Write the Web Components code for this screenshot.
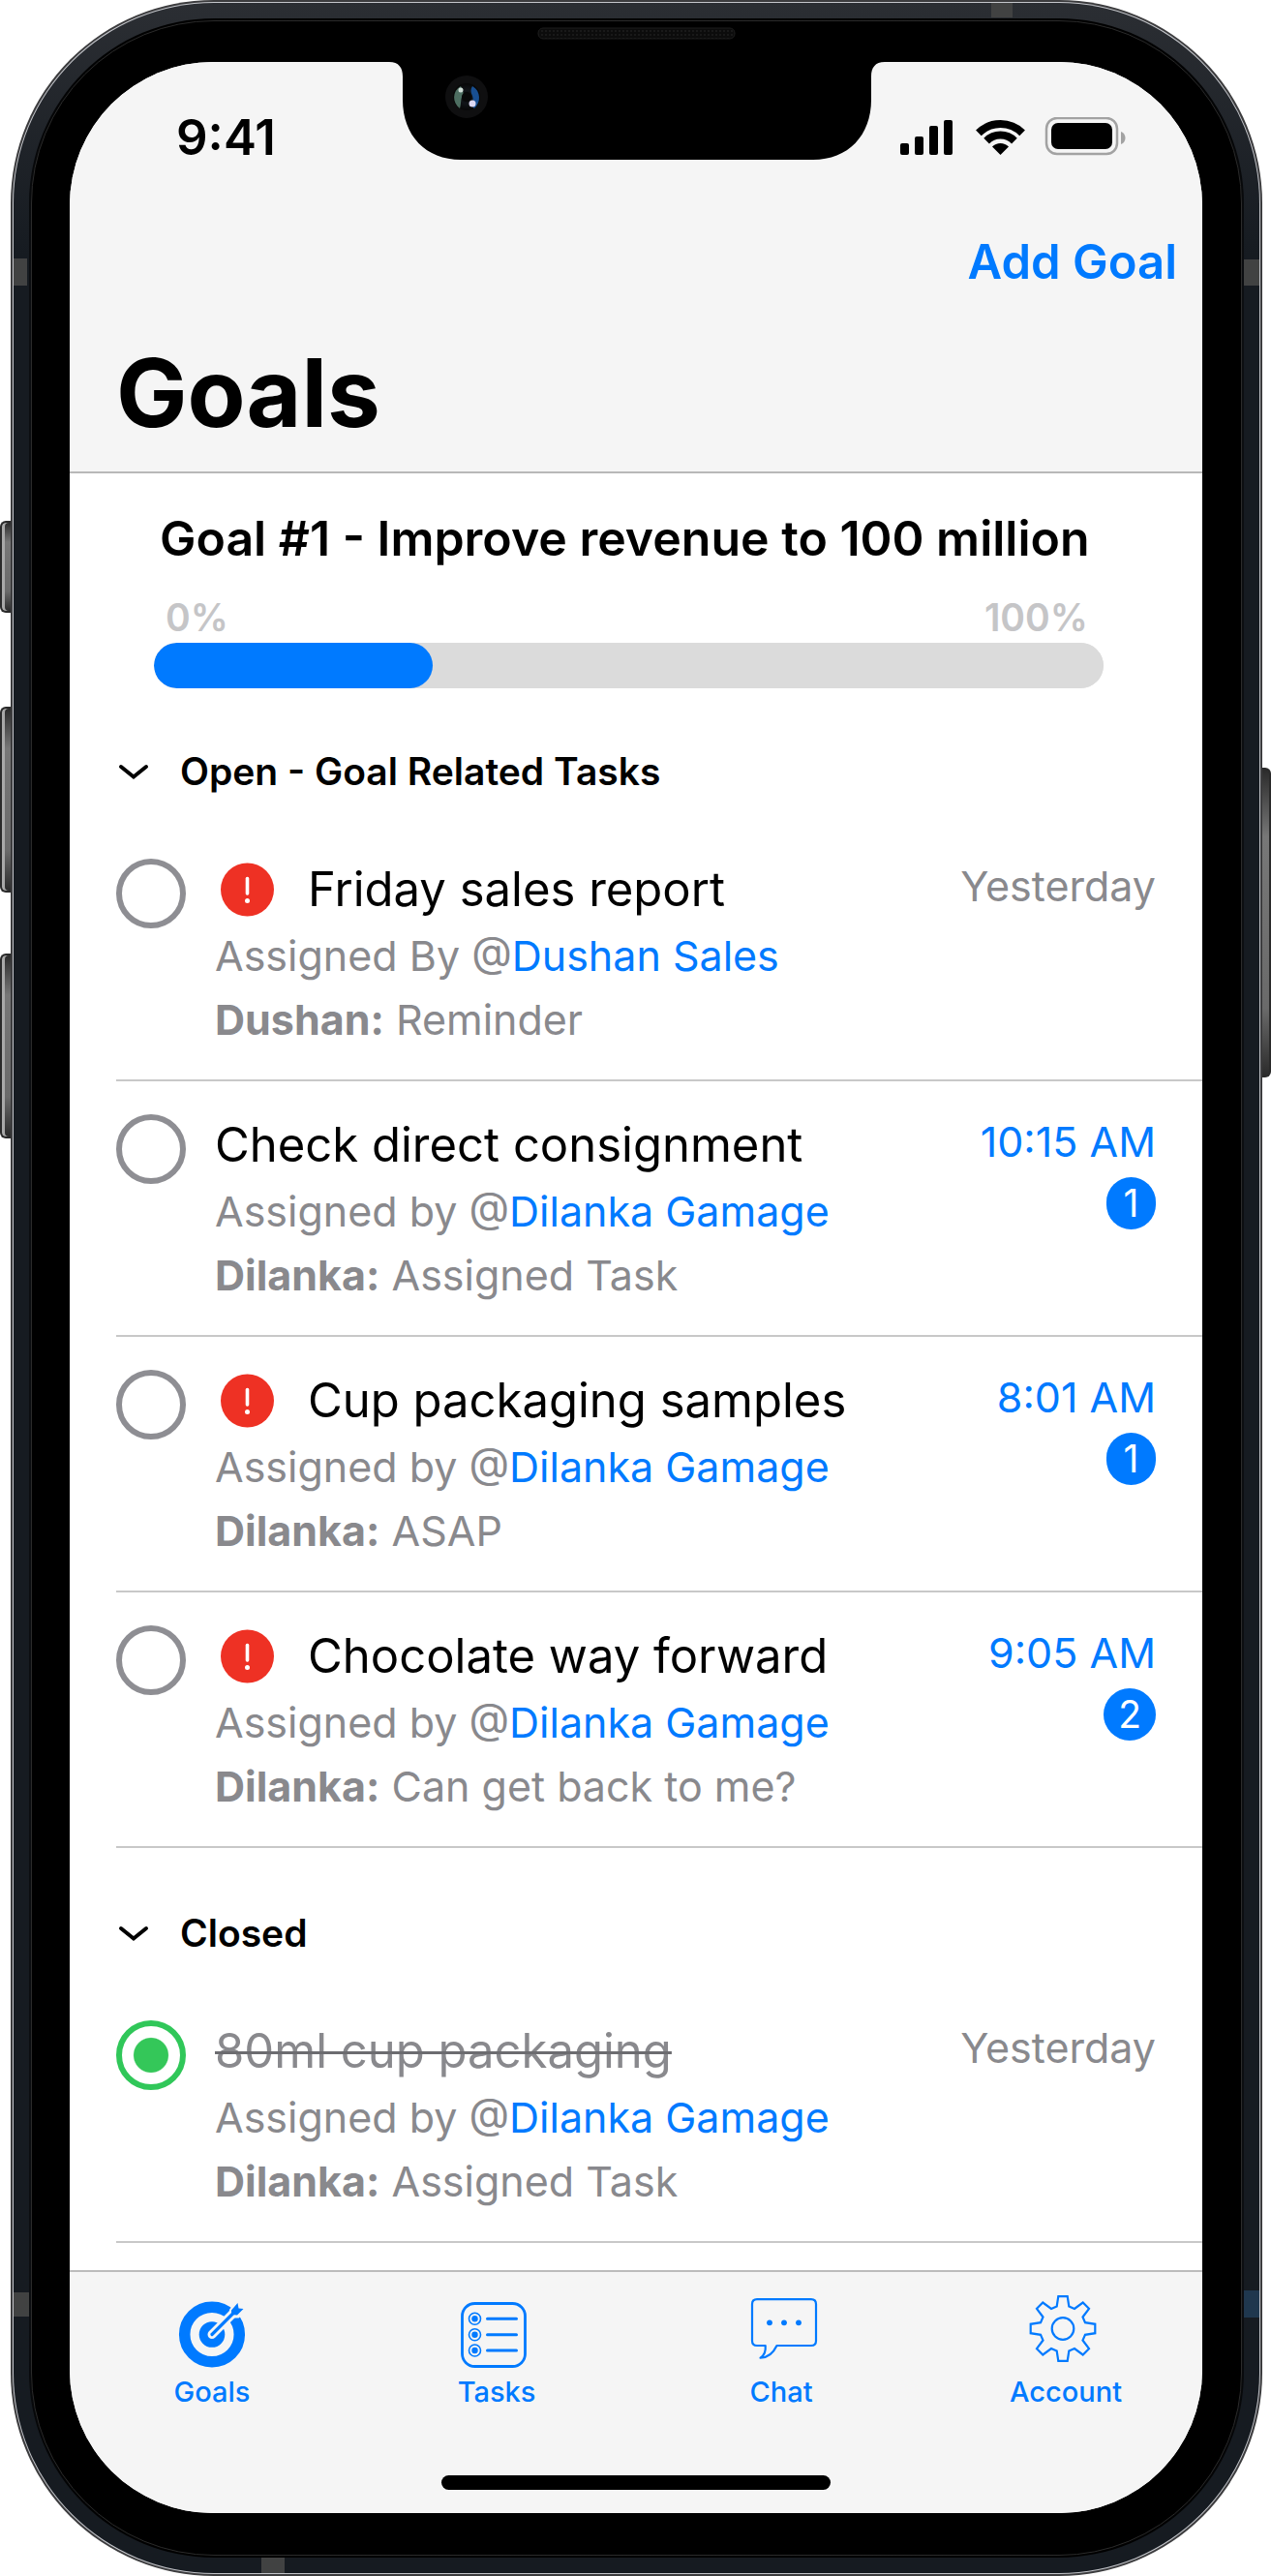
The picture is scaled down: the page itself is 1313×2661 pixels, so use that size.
<!DOCTYPE html>
<html lang="en">
<head>
<meta charset="utf-8">
<meta name="viewport" content="width=device-width, initial-scale=1">
<title>Goals</title>
<style>
  html, body { margin: 0; background: #fff; }
  body {
    font-family: Inter, "Liberation Sans", sans-serif;
    color: #000;
    --blue: #007aff;
    --grey: #89898d;
    --bar: #f5f5f5;
    --line: #c8c8c8;
  }
</style>
</head>
<body>

<phone-shell>
  <app-header heading="Goals" action="Add Goal">
    <status-bar time="9:41"></status-bar>
  </app-header>
  <goal-list>
    <goal-progress value="29.4" from="0%" to="100%">Goal #1 - Improve revenue to 100 million</goal-progress>
    <task-section heading="Open - Goal Related Tasks">
      <task-row urgent time="Yesterday" verb="Assigned By" person="Dushan Sales" author="Dushan" note="Reminder">Friday sales report</task-row>
      <task-row unread="1" time="10:15 AM" verb="Assigned by" person="Dilanka Gamage" author="Dilanka" note="Assigned Task">Check direct consignment</task-row>
      <task-row urgent unread="1" time="8:01 AM" verb="Assigned by" person="Dilanka Gamage" author="Dilanka" note="ASAP">Cup packaging samples</task-row>
      <task-row urgent unread="2" time="9:05 AM" verb="Assigned by" person="Dilanka Gamage" author="Dilanka" note="Can get back to me?">Chocolate way forward</task-row>
    </task-section>
    <task-section heading="Closed">
      <task-row done time="Yesterday" verb="Assigned by" person="Dilanka Gamage" author="Dilanka" note="Assigned Task">80ml cup packaging</task-row>
    </task-section>
  </goal-list>
  <tab-bar>
    <tab-item icon="goals" href="#goals">Goals</tab-item>
    <tab-item icon="tasks" href="#tasks">Tasks</tab-item>
    <tab-item icon="chat" href="#chat">Chat</tab-item>
    <tab-item icon="account" href="#account">Account</tab-item>
  </tab-bar>
</phone-shell>

<script>
const define = (name, render, after) => {
  customElements.define(name, class extends HTMLElement {
    connectedCallback() {
      if (this.shadowRoot) return;
      const root = this.attachShadow({ mode: 'open' });
      const template = document.createElement('template');
      template.innerHTML = '<style>*{box-sizing:border-box}</style>' + render(this);
      root.append(template.content.cloneNode(true));
      if (after) after(this, root);
    }
  });
};
const attr = (el, name) => el.getAttribute(name) || '';

/* Phone body: metal rim, coloured band, black glass, rounded screen */
define('phone-shell', () => `
  <style>
    :host { display: block; position: relative; padding: 0 9px 0 11px; }
    .rim { position: relative; padding: 2px; border-radius: 210px; background: #3c3c3e; }
    .edge { padding: 1px; border-radius: 208px; background: #c3c5ca; }
    .band { position: relative; padding: 16px; border-radius: 207px;
      background: linear-gradient(#2b2e33, #161b21 260px); }
    .shade { padding: 2px; border-radius: 191px; background: linear-gradient(#000, #0c0e11 260px, #0c0e11 90%, #000); }
    .glass { padding: 42px 40px 43px 39px; border: 1px solid #2b2b2b; border-radius: 189px; background: #000; }
    .screen { display: flex; flex-direction: column; border-radius: 148px; overflow: hidden; background: #fff; }
    .key { position: absolute; width: 11px; border: 2px solid #2a2a2a;
      background: linear-gradient(#2b2b2b, #777 22%, #6a6a6a 78%, #2b2b2b); }
    .key.l { left: 0; border-right: 0; border-radius: 6px 0 0 6px; box-shadow: inset 3px 0 0 #a8a8a8; }
    .key.r { right: 0; width: 10px; border-left: 0; border-radius: 0 6px 6px 0; }
    .mute { top: 538px; height: 95px; }
    .up { top: 730px; height: 192px; }
    .down { top: 985px; height: 191px; }
    .power { top: 793px; height: 320px; }
    .seam { position: absolute; background: #414242; }
    .seam.tl { left: 0; top: 264px; width: 14px; height: 28px; }
    .seam.tr { right: 0; top: 265px; width: 16px; height: 27px; }
    .seam.bl { left: 0; bottom: 265px; width: 16px; height: 25px; }
    .seam.br { right: 0; bottom: 264px; width: 16px; height: 28px; background: #1f374e; }
    .seam.t { right: 255px; top: 0; width: 22px; height: 15px; }
    .seam.b { left: 256px; bottom: 0; width: 24px; height: 16px; }
    device-notch { position: absolute; top: 22px; left: 0; right: 0; }
  </style>
  <div class="key l mute"></div><div class="key l up"></div><div class="key l down"></div><div class="key r power"></div>
  <div class="rim"><div class="edge"><div class="band">
    <div class="seam tl"></div><div class="seam tr"></div><div class="seam bl"></div>
    <div class="seam br"></div><div class="seam t"></div><div class="seam b"></div>
    <div class="shade"><div class="glass"><div class="screen"><slot></slot></div></div></div>
  </div></div><device-notch></device-notch></div>`);

/* Notch with the speaker slit and the front camera */
define('device-notch', () => `
  <style>:host { display: block; pointer-events: none; } svg { display: block; margin: 0 auto; }</style>
  <svg width="512" height="143" viewBox="0 0 512 143" aria-hidden="true">
    <defs>
      <pattern id="mesh" width="4" height="4" patternUnits="userSpaceOnUse"><rect width="4" height="4" fill="#0c0c0c"/><circle cx="2" cy="2" r="1" fill="#1d1d1d"/></pattern>
      <radialGradient id="lens"><stop offset="0" stop-color="#050505"/><stop offset=".5" stop-color="#111418"/><stop offset="1" stop-color="#070707"/></radialGradient>
    </defs>
    <path d="M0 42H512C502 42 498 48 498 57V81C498 118 474 143 438 143H74C38 143 14 118 14 81V57C14 48 10 42 0 42Z"/>
    <rect x="154" y="7" width="203" height="11" rx="5" fill="url(#mesh)" stroke="#1c1c1c"/>
    <circle cx="80" cy="78" r="22" fill="#0f0f10"/>
    <circle cx="80" cy="78" r="14" fill="url(#lens)"/>
    <path d="M74 67C65 72 65 84 73 90C75 84 73 80 77 75Z" fill="#4d6e61"/>
    <path d="M86 67C95 72 95 84 88 90C84 88 88 82 86 77C84 73 84 70 86 67Z" fill="#184f92"/>
    <circle cx="74" cy="71" r="2.5" fill="#cfdcd6"/><circle cx="86" cy="85" r="3.5" fill="#dcd8f3"/>
    <circle cx="80" cy="78" r="5" fill="#080808"/>
  </svg>`);

define('status-bar', el => `
  <style>
    :host { display: flex; justify-content: space-between; align-items: center; padding: 48px 79px 0 110px; }
    time { font-size: 51px; line-height: 60px; font-weight: 600; }
  </style>
  <time>${attr(el, 'time')}</time>
  <svg width="233" height="42" viewBox="0 0 233 42" aria-hidden="true">
    <rect x="0" y="27" width="9" height="12" rx="2"/><rect x="15" y="20" width="9" height="19" rx="2"/>
    <rect x="30" y="9" width="9" height="30" rx="2"/><rect x="45" y="3" width="9" height="36" rx="2"/>
    <g transform="translate(78 3)">
      <path d="M2.9 13.4A32 32 0 0 1 48.1 13.4M11.1 21.6A20.3 20.3 0 0 1 39.9 21.6" fill="none" stroke="#000" stroke-width="8"/>
      <path d="M17 27.5A12 12 0 0 1 34 27.5L25.5 36Z"/>
    </g>
    <rect x="151" y="1" width="73" height="37" rx="11" fill="none" stroke="#a2a2a2" stroke-width="2.5"/>
    <rect x="156" y="6" width="63" height="27" rx="7"/>
    <path d="M228 15C234 17 234 26 228 28Z" fill="#a2a2a2"/>
  </svg>`);

define('app-header', el => `
  <style>
    :host { display: block; background: var(--bar); border-bottom: 2px solid #b8b8b8; }
    .actions { display: flex; justify-content: flex-end; padding: 69px 26px 0; }
    button { all: unset; cursor: pointer; color: var(--blue); font-size: 49px; line-height: 60px; font-weight: 600; }
    h1 { margin: 0; padding: 45px 48px 21px; font-size: 98px; line-height: 120px; font-weight: 700; }
  </style>
  <slot></slot>
  <div class="actions"><button type="button">${attr(el, 'action')}</button></div>
  <h1>${attr(el, 'heading')}</h1>`);

define('goal-list', () => `
  <style>:host { display: block; flex: 1; padding-bottom: 26px; background: #fff; }</style>
  <slot></slot>`);

define('goal-progress', el => `
  <style>
    :host { display: block; padding: 37px 102px 0 87px; }
    h2 { margin: 0 0 29px; padding-left: 6px; font-size: 50px; line-height: 60px; font-weight: 600; white-space: nowrap; }
    .scale { display: flex; justify-content: space-between; padding: 0 16px 0 12px; margin-bottom: 3px;
      color: #c5c5c7; font-size: 39px; line-height: 46px; font-weight: 600; }
    progress { appearance: none; -webkit-appearance: none; display: block; width: 100%; height: 47px; border: 0; border-radius: 24px; overflow: hidden; background: #dbdbdb; }
    progress::-webkit-progress-bar { background: #dbdbdb; border-radius: 24px; }
    progress::-webkit-progress-value { background: var(--blue); border-radius: 24px; }
  </style>
  <h2 id="name"><slot></slot></h2>
  <div class="scale"><span>${attr(el, 'from')}</span><span>${attr(el, 'to')}</span></div>
  <progress aria-labelledby="name" max="100" value="${attr(el, 'value')}"></progress>`);

define('task-section', el => `
  <style>
    :host { display: block; padding-bottom: 2px; }
    button { all: unset; cursor: pointer; box-sizing: border-box; width: 100%; display: flex; align-items: center; gap: 30px;
      padding: 63px 48px 33px; font-size: 39px; line-height: 46px; font-weight: 600; }
    svg { flex: none; }
    .rows[hidden] { display: none; }
  </style>
  <button type="button" aria-expanded="true">
    <svg width="36" height="20" viewBox="0 0 36 20" aria-hidden="true"><path d="M5 5L18 15.500L31 5" fill="none" stroke="#000" stroke-width="4" stroke-linecap="round"/></svg>
    <span>${attr(el, 'heading')}</span>
  </button>
  <div class="rows"><slot></slot></div>`,
  (el, root) => {
    const button = root.querySelector('button');
    button.addEventListener('click', () => {
      const rows = root.querySelector('.rows');
      rows.hidden = !rows.hidden;
      button.setAttribute('aria-expanded', String(!rows.hidden));
    });
  });

define('task-row', el => `
  <style>
    :host { display: flex; align-items: flex-start; margin-left: 48px; padding-right: 48px; border-bottom: 2px solid var(--line); }
    input { appearance: none; -webkit-appearance: none; flex: none; width: 72px; height: 72px; margin: 34px 30px 0 0;
      border: 6px solid #8e8e93; border-radius: 50%; }
    input:checked { border-color: #30c759; background: radial-gradient(circle closest-side, #34c759 58%, #fff 62%); }
    .body { flex: 1; min-width: 0; padding: 36px 0 29px; }
    .title { display: flex; align-items: center; gap: 34px; margin-bottom: 5px; font-size: 49px; line-height: 60px; white-space: nowrap; }
    :host([done]) label { color: var(--grey); text-decoration: line-through #6c6c70 3px; }
    p { margin: 0; font-size: 43px; line-height: 66px; color: var(--grey); white-space: nowrap; }
    b { font-weight: 700; }
    a { color: var(--blue); text-decoration: none; }
    .side { display: flex; flex-direction: column; align-items: flex-end; gap: 7px; padding-top: 32px; }
    time { font-size: 43px; line-height: 60px; color: var(--grey); white-space: nowrap; }
    time.new { color: var(--blue); }
    .badge { min-width: 51px; height: 54px; padding: 0 15px; border-radius: 27px; background: var(--blue); color: #fff;
      font-size: 39px; line-height: 54px; text-align: center; }
  </style>
  <input type="checkbox" id="done" ${el.hasAttribute('done') ? 'checked' : ''}>
  <div class="body">
    <div class="title">
      ${el.hasAttribute('urgent') ? `<svg width="62" height="56" viewBox="0 0 62 56" role="img" aria-label="Urgent"><circle cx="33.500" cy="28" r="27.500" fill="#ee3124"/><path d="M33.500 16.500V32" stroke="#fff" stroke-width="3.600" stroke-linecap="round"/><circle cx="33.500" cy="39.500" r="2.500" fill="#fff"/></svg>` : ''}
      <label for="done"><slot></slot></label>
    </div>
    <p>${attr(el, 'verb')} @<a href="#person">${attr(el, 'person')}</a></p>
    <p><b>${attr(el, 'author')}:</b> ${attr(el, 'note')}</p>
  </div>
  <div class="side">
    <time class="${el.hasAttribute('unread') ? 'new' : ''}">${attr(el, 'time')}</time>
    ${el.hasAttribute('unread') ? `<span class="badge">${attr(el, 'unread')}</span>` : ''}
  </div>`);

define('tab-bar', () => `
  <style>
    :host { display: block; background: var(--bar); border-top: 2px solid #bcbcbc; }
    nav { display: flex; justify-content: space-between; padding: 20px 79px 0 85px; }
    .home { width: 402px; max-width: 60%; height: 15px; margin: 68px auto 24px; border-radius: 8px; background: #000; }
  </style>
  <nav><slot></slot></nav>
  <div class="home"></div>`);

const icons = {
  goals: `
    <circle cx="36" cy="44.500" r="28.300" fill="none" stroke="#007aff" stroke-width="11.500"/>
    <circle cx="36" cy="44.500" r="13.300" fill="#007aff"/>
    <g transform="translate(36 44.500)">
      <path d="M0 0L21 -21" stroke="#f5f5f5" stroke-width="9" stroke-linecap="round"/>
      <path d="M20 -25L27 -34L36 -27L27 -19L19 -19Z" fill="#f5f5f5" stroke="#f5f5f5" stroke-width="4"/>
      <path d="M0 0L24 -24" stroke="#007aff" stroke-width="3.200" stroke-linecap="round"/>
      <path d="M20 -20.500V-25L26.500 -32.500L27.500 -27L32.500 -26.500L26 -20Z" fill="#007aff"/>
    </g>`,
  tasks: `
    <g fill="none" stroke="#007aff">
      <rect x=".5" y="12.500" width="65" height="65" rx="13" stroke-width="2.800"/>
      <g stroke-width="1.600"><circle cx="13.500" cy="28.300" r="6"/><circle cx="13.500" cy="44.700" r="6"/><circle cx="13.500" cy="61" r="6"/></g>
      <path d="M26.500 28.300H56.500M26.500 44.700H56.500M26.500 61H56.500" stroke-width="3" stroke-linecap="round"/>
    </g>
    <g fill="#007aff"><circle cx="13.500" cy="28.300" r="3.200"/><circle cx="13.500" cy="44.700" r="3.200"/><circle cx="13.500" cy="61" r="3.200"/></g>`,
  chat: `
    <path d="M11 8.200H67Q72 8.200 72 13.200V51Q72 56 67 56H31.500Q25.500 68.500 14.500 68.700Q20.500 65 19.700 56H11Q6 56 6 51V13.200Q6 8.200 11 8.200Z" fill="none" stroke="#007aff" stroke-width="2.200" stroke-linejoin="round"/>
    <g fill="#007aff"><circle cx="24" cy="32.300" r="2.900"/><circle cx="39" cy="32.300" r="2.900"/><circle cx="54" cy="32.300" r="2.900"/></g>`,
  account: `
    <g transform="translate(33 38.500)" fill="none" stroke="#007aff" stroke-width="2.200">
      <path d="M4.700 -33.300L6.300 -23L12 -20.500L20.700 -27L27 -20.700L20.500 -12L23 -6.300L33.300 -4.700V4.700L23 6.300L20.500 12L27 20.700L20.700 27L12 20.500L6.300 23L4.700 33.300H-4.700L-6.300 23L-12 20.500L-20.700 27L-27 20.700L-20.500 12L-23 6.300L-33.300 4.700V-4.700L-23 -6.300L-20.500 -12L-27 -20.700L-20.700 -27L-12 -20.500L-6.300 -23L-4.700 -33.300Z"/>
      <circle r="11.300"/>
    </g>`
};

define('tab-item', el => `
  <style>
    :host { display: block; width: 124px; }
    a { display: flex; flex-direction: column; align-items: center; gap: 2px; color: var(--blue); text-decoration: none;
      font-size: 29px; line-height: 36px; font-weight: 500; white-space: nowrap; }
    svg { overflow: visible; }
  </style>
  <a href="${attr(el, 'href')}">
    <svg width="72" height="84" viewBox="0 0 72 84" aria-hidden="true">${icons[attr(el, 'icon')]}</svg>
    <span><slot></slot></span>
  </a>`);
</script>
</body>
</html>
